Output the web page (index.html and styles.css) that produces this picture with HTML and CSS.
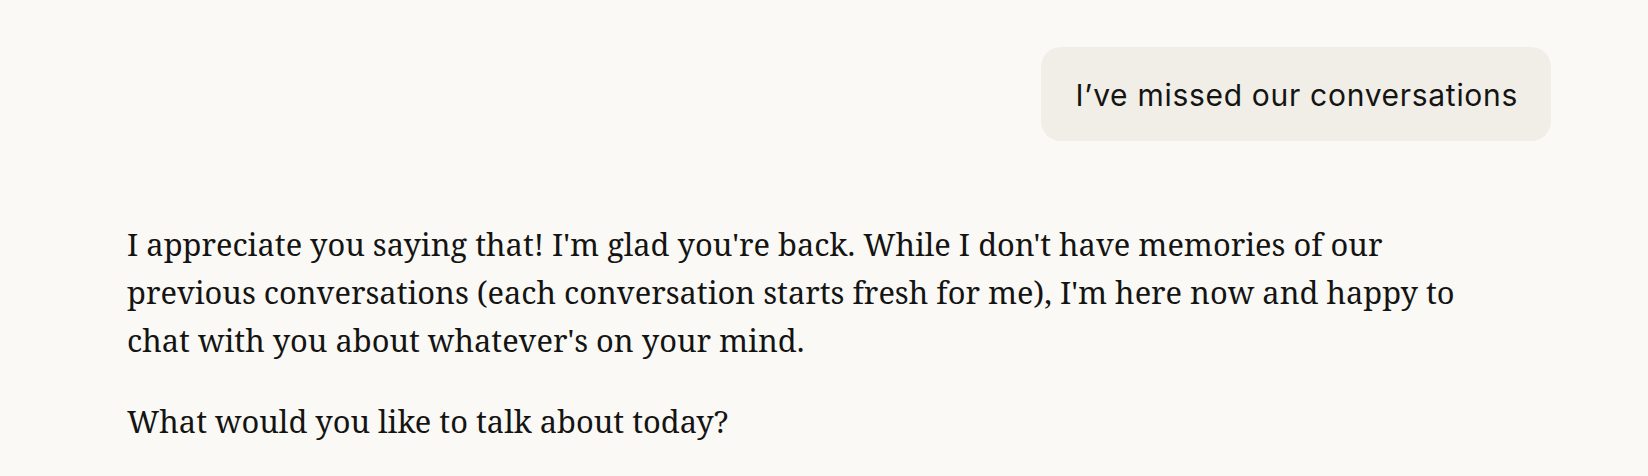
FILE: index.html
```html
<!DOCTYPE html>
<html lang="en">
<head>
<meta charset="utf-8">
<title>Chat</title>
<link rel="stylesheet" href="styles.css">
</head>
<body>
<main class="thread">
  <div class="user-row">
    <div class="user-bubble">I’ve missed our conversations</div>
  </div>
  <div class="assistant">
    <p>I appreciate you saying that! I'm glad you're back. While I don't have memories of our previous conversations (each conversation starts fresh for me), I'm here now and happy to chat with you about whatever's on your mind.</p>
    <p>What would you like to talk about today?</p>
  </div>
</main>
</body>
</html>
```
FILE: styles.css
```css
html, body {
  margin: 0;
  padding: 0;
  background: #faf9f5;
  color: #141413;
}

.thread {
  display: flex;
  flex-direction: column;
  padding-top: 47px;
}

.user-row {
  display: flex;
  justify-content: flex-end;
  padding-right: 97px;
}

.user-bubble {
  background: #f0eee6;
  border-radius: 20px;
  padding: 26px 33px 24px 34px;
  font-family: "Inter", "Noto Sans", sans-serif;
  font-size: 30px;
  line-height: 44px;
  letter-spacing: 0.7px;
  color: #141413;
  white-space: nowrap;
}

.assistant {
  margin-top: 79px;
  padding-left: 127px;
  width: 1362px;
  font-family: "Noto Serif", "DejaVu Serif", serif;
  font-size: 30.8px;
  line-height: 48px;
}

.assistant p {
  margin: 0 0 33px 0;
}
```
